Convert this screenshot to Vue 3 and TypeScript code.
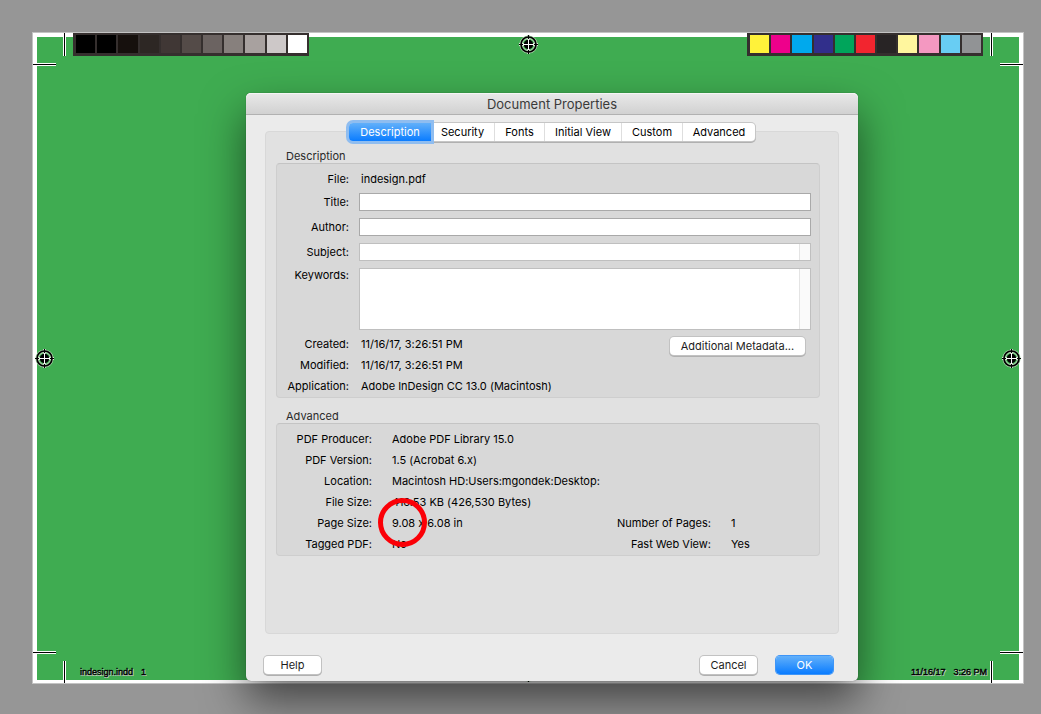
<script setup lang="ts">
import { ref } from 'vue'

const grays: string[] = ['#000000', '#000000', '#16100d', '#2d2724', '#403735', '#544b48', '#6b6361', '#87807d', '#a8a19f', '#cdc8c8', '#ffffff']
const inks: string[] = ['#fff23a', '#ee008b', '#00a9ed', '#312f8b', '#00a55b', '#f2252f', '#282425', '#fff69e', '#f498c1', '#68cdf3', '#919395']

const tabs: string[] = ['Description', 'Security', 'Fonts', 'Initial View', 'Custom', 'Advanced']
const activeTab = ref('Description')

const title = ref('')
const author = ref('')
const subject = ref('')
const keywords = ref('')

interface Row {
  label: string
  value: string
  marked?: boolean
}

const dates: Row[] = [
  { label: 'Created:', value: '11/16/17, 3:26:51 PM' },
  { label: 'Modified:', value: '11/16/17, 3:26:51 PM' },
  { label: 'Application:', value: 'Adobe InDesign CC 13.0 (Macintosh)' },
]
const pdf: Row[] = [
  { label: 'PDF Producer:', value: 'Adobe PDF Library 15.0' },
  { label: 'PDF Version:', value: '1.5 (Acrobat 6.x)' },
  { label: 'Location:', value: 'Macintosh HD:Users:mgondek:Desktop:' },
  { label: 'File Size:', value: '416.53 KB (426,530 Bytes)' },
  { label: 'Page Size:', value: '9.08 x 6.08 in', marked: true },
  { label: 'Tagged PDF:', value: 'No' },
]
const web: Row[] = [
  { label: 'Number of Pages:', value: '1' },
  { label: 'Fast Web View:', value: 'Yes' },
]
const registration: string[] = ['reg-top', 'reg-left', 'reg-right', 'reg-bottom']
const crops: string[] = ['v tl', 'v tr', 'v bl', 'v br', 'h tl', 'h tr', 'h bl', 'h br']
</script>

<template>
  <main class="desk">
    <div class="sheet">
      <i v-for="c in crops" :key="c" class="crop" :class="c"></i>
      <div class="bar bar-gray">
        <i v-for="(c, i) in grays" :key="i" :style="{ background: c }"></i>
      </div>
      <div class="bar bar-ink">
        <i v-for="(c, i) in inks" :key="i" :style="{ background: c }"></i>
      </div>
      <svg v-for="r in registration" :key="r" class="reg" :class="r" viewBox="0 0 21 21" aria-hidden="true">
        <circle cx="10.5" cy="10.5" r="7.3" fill="none" stroke="#a9d6aa" stroke-width="3.6" />
        <path d="M10.5 1V20M1 10.5H20" stroke="#d5ead3" stroke-width="3" />
        <circle cx="10.5" cy="10.5" r="7.5" fill="none" stroke="#000" stroke-width="1.7" />
        <path d="M10.5 1V20M1 10.5H20" stroke="#000" stroke-width="1.2" />
        <circle cx="10.5" cy="10.5" r="4.7" fill="#000" />
        <path d="M10.5 5V16M5 10.5H16" stroke="#fff" stroke-width="1" />
      </svg>
      <div class="slug slug-left"><span>indesign.indd</span><span>1</span></div>
      <div class="slug slug-right"><span>11/16/17</span><span>3:26 PM</span></div>

      <section class="dialog" role="dialog" aria-labelledby="dialog-title">
        <h1 id="dialog-title" class="titlebar">Document Properties</h1>
        <div class="body">
          <div class="tabs" role="tablist">
            <button
              v-for="t in tabs"
              :key="t"
              type="button"
              role="tab"
              class="tab"
              :class="{ active: t === activeTab }"
              :aria-selected="t === activeTab"
              @click="activeTab = t"
            >{{ t }}</button>
          </div>
          <div class="panel">
            <h2 class="heading">Description</h2>
            <div class="group">
              <div class="row">
                <span class="label">File:</span><span class="value">indesign.pdf</span>
              </div>
              <div class="fields">
                <div class="field">
                  <label class="label" for="f-title">Title:</label>
                  <input id="f-title" v-model="title" type="text" class="box" />
                </div>
                <div class="field">
                  <label class="label" for="f-author">Author:</label>
                  <input id="f-author" v-model="author" type="text" class="box" />
                </div>
                <div class="field">
                  <label class="label" for="f-subject">Subject:</label>
                  <textarea id="f-subject" v-model="subject" class="box area"></textarea>
                </div>
                <div class="field multiline">
                  <label class="label" for="f-keywords">Keywords:</label>
                  <textarea id="f-keywords" v-model="keywords" class="box area tall"></textarea>
                </div>
              </div>
              <div class="details">
                <div>
                  <div v-for="d in dates" :key="d.label" class="row">
                    <span class="label">{{ d.label }}</span><span class="value">{{ d.value }}</span>
                  </div>
                </div>
                <button type="button" class="push">Additional Metadata...</button>
              </div>
            </div>

            <h2 class="heading second">Advanced</h2>
            <div class="group advanced">
              <div>
                <div v-for="p in pdf" :key="p.label" class="row">
                  <span class="label">{{ p.label }}</span>
                  <span class="value">{{ p.value }}<i v-if="p.marked" class="ring"></i></span>
                </div>
              </div>
              <div class="web">
                <div v-for="w in web" :key="w.label" class="row">
                  <span class="label">{{ w.label }}</span><span class="value">{{ w.value }}</span>
                </div>
              </div>
            </div>
          </div>
        </div>
        <footer class="footer">
          <button type="button" class="push small">Help</button>
          <div class="actions">
            <button type="button" class="push small">Cancel</button>
            <button type="button" class="push small primary">OK</button>
          </div>
        </footer>
      </section>
    </div>
  </main>
</template>

<style>
body {
  background: #969696;
}
</style>

<style scoped>
* {
  box-sizing: border-box;
}
.desk {
  display: flex;
  min-height: 100vh;
  padding: 32px 17px 30px 32px;
  overflow: hidden;
  background: #969696;
  font-family: Inter, "Liberation Sans", sans-serif;
  font-size: 11px;
  font-variant-ligatures: no-contextual;
  color: #000;
}
.sheet {
  position: relative;
  flex: 1;
  min-height: 652px;
  border: 1px solid #c3c3c3;
  background: #3fac51;
  box-shadow: inset 4px 4px #fff, inset -4px -3px #fff;
}

/* printer marks */
.crop {
  position: absolute;
  background: #000;
}
.crop.v {
  width: 1px;
  height: 23px;
  box-shadow: -1px 0 #fff, 1px 0 #fff;
}
.crop.h {
  width: 23px;
  height: 1px;
  box-shadow: 0 -1px #fff, 0 1px #fff;
}
.v.tl { left: 31px; top: 0; }
.v.tr { right: 31px; top: 0; }
.v.bl { left: 31px; bottom: 0; height: 22px; }
.v.br { right: 31px; bottom: 0; height: 22px; }
.h.tl { left: 0; top: 31px; }
.h.tr { right: 0; top: 31px; }
.h.bl { left: 0; bottom: 30px; }
.h.br { right: 0; bottom: 30px; }

.bar {
  position: absolute;
  top: 0;
  display: grid;
  grid-template-columns: repeat(11, 1fr);
  gap: 2px;
  width: 236px;
  height: 23px;
  padding: 2px 2px 3px 3px;
  background: #352f2e;
}
.bar-gray { left: 40px; }
.bar-ink { right: 40px; }

.reg {
  position: absolute;
  width: 21px;
  height: 21px;
}
.reg-top { left: calc(50% - 10px); top: 1px; }
.reg-bottom { left: calc(50% - 10px); bottom: 0; }
.reg-left { left: 1px; top: calc(50% - 10px); }
.reg-right { right: 1px; top: calc(50% - 10px); }

.slug {
  position: absolute;
  bottom: 5px;
  display: flex;
  gap: 8px;
  font: 9px/12px "Liberation Sans", Arial, sans-serif;
  -webkit-text-stroke: 0.4px #000;
  text-shadow: 1px 1px #c9d8c6, 0 1px #c9d8c6;
}
.slug-left { left: 47px; }
.slug-right { right: 36px; }

/* dialog window */
.dialog {
  position: absolute;
  left: 213px;
  right: 165px;
  top: 60px;
  bottom: 2px;
  display: flex;
  flex-direction: column;
  border-radius: 5px;
  background: #ebebeb;
  box-shadow: 0 0 1px rgba(0, 0, 0, 0.5), 0 20px 44px rgba(0, 0, 0, 0.55);
}
.titlebar {
  height: 22px;
  margin: 0;
  border-bottom: 1px solid #b1b1b1;
  border-radius: 5px 5px 0 0;
  background: linear-gradient(#e9e9e9, #d1d1d1);
  box-shadow: inset 0 1px #f5f5f5;
  font-size: 13px;
  font-weight: 400;
  line-height: 22px;
  text-align: center;
  color: #3a3a3a;
}
.body {
  flex: 1;
  display: flex;
  flex-direction: column;
  padding: 8px 19px 0;
}
.tabs {
  position: relative;
  z-index: 1;
  display: grid;
  grid-template-columns: 82px 64px 50px 77px 61px 72px;
  align-self: center;
  height: 18px;
  margin-bottom: -10px;
  border-radius: 4px;
  background: #fff;
  box-shadow: 0 0 0 1px #c6c6c6, 0 1px 0 1px #b0b0b0;
}
.tab {
  padding: 0;
  border: 0;
  border-right: 1px solid #dedede;
  background: none;
  font: inherit;
  font-variant-ligatures: inherit;
  line-height: 18px;
  color: #000;
}
.tab:last-child {
  border-right: 0;
}
.tab.active {
  border: 0;
  border-radius: 4px 0 0 4px;
  background: linear-gradient(#62b0fa, #0a7cff);
  box-shadow: 0 0 0 3px #8fbdf0;
  color: #fff;
}
.panel {
  flex: 1;
  padding: 17px 18px 0 10px;
  border: 1px solid #d8d8d8;
  border-radius: 4px;
  background: #e1e1e1;
}
.heading {
  margin: 0 0 0 10px;
  font-size: 11px;
  font-weight: 400;
  line-height: 14px;
  color: #2a2a2a;
}
.heading.second {
  margin-top: 11px;
}
.group {
  padding: 5px 8px 0 0;
  border: 1px solid #cecece;
  border-top-color: #c4c4c4;
  border-radius: 4px;
  background: #d8d8d8;
}
.row {
  display: flex;
  line-height: 21px;
  white-space: nowrap;
}
.label {
  flex: none;
  width: 72px;
  text-align: right;
}
.value {
  position: relative;
  margin-left: 12px;
}
.fields {
  display: flex;
  flex-direction: column;
  gap: 7px;
  margin: 3px 0 4px;
}
.field {
  display: flex;
  line-height: 18px;
}
.multiline {
  line-height: 14px;
}
.box {
  flex: 1;
  min-width: 0;
  height: 18px;
  margin: 0 0 0 10px;
  padding: 0 4px;
  border: 1px solid #a9a9a9;
  border-radius: 0;
  outline: 0;
  background: #fff;
  font: inherit;
}
.area {
  border-color: #bfbfbf;
  background: linear-gradient(90deg, #e4e4e4 1px, #fafafa 1px) right / 11px 100% no-repeat #fff;
  overflow: hidden;
  resize: none;
}
.tall {
  height: 62px;
}
.details {
  display: flex;
  justify-content: space-between;
  align-items: flex-start;
}
.push {
  height: 18px;
  padding: 0 10px;
  border: 0;
  border-radius: 4px;
  background: #fff;
  box-shadow: 0 0 0 1px #c2c2c2, 0 1px 0 1px #b0b0b0;
  font: inherit;
  line-height: 18px;
  color: #1c1c1c;
}
.details .push {
  width: 135px;
  margin: 3px 6px 0 0;
  padding: 0;
}
.advanced {
  display: flex;
  justify-content: space-between;
  padding-right: 0;
}
.advanced .label {
  width: 95px;
}
.advanced .value {
  margin-left: 20px;
}
.web {
  align-self: flex-end;
  width: 203px;
}
.ring {
  position: absolute;
  z-index: 1;
  left: -14px;
  top: -15px;
  width: 49px;
  height: 49px;
  border: 5px solid #fb0007;
  border-radius: 50%;
}
.footer {
  display: flex;
  justify-content: space-between;
  padding: 22px 25px 7px 18px;
}
.actions {
  display: flex;
  gap: 19px;
}
.small {
  width: 57px;
  padding: 0;
}
.primary {
  background: linear-gradient(#62b0fa, #0a7cff);
  box-shadow: 0 0 0 1px #3e95f7;
  color: #fff;
}
</style>
